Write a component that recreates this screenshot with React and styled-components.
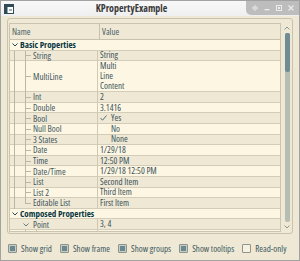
import React from 'react'
import styled, { createGlobalStyle } from 'styled-components'

const GlobalStyle = createGlobalStyle`
  html, body {
    margin: 0;
    padding: 0;
    background: #eee8d5;
  }
  body {
    font-family: "Open Sans", "Liberation Sans", Arial, sans-serif;
    font-stretch: 82%;
    font-size: 9px;
    color: #3f565e;
  }
`

const Window = styled.div`
  width: 300px;
  height: 261px;
  box-sizing: border-box;
  border: 1px solid #a2a2a2;
  background: #eee8d5;
  display: flex;
  flex-direction: column;
  overflow: hidden;
`

const TitleBar = styled.div`
  height: 15px;
  flex: none;
  display: flex;
  align-items: flex-start;
  background: linear-gradient(#f8f8f8, #efefef);
`

const AppIcon = styled.div`
  width: 16px;
  height: 15px;
  display: flex;
  align-items: center;
  justify-content: center;
`

const Title = styled.div`
  flex: 1;
  text-align: center;
  line-height: 15px;
  font-weight: bold;
  font-stretch: 75%;
  font-size: 10px;
  color: #3a3a3a;
`

const Buttons = styled.div`
  width: 53px;
  height: 14px;
  background: #bdbdbd;
  border-bottom-left-radius: 5px;
  display: flex;
  align-items: center;
  justify-content: space-around;
  padding: 0 2px 0 3px;
  box-sizing: border-box;
`

const Frame = styled.div`
  margin: 2px 6px 0 6px;
  height: 216px;
  box-sizing: border-box;
  border: 1px solid #c9c2ae;
  border-radius: 3px;
  padding: 4px 0 1px 1px;
  display: flex;
  flex: none;
`

const Table = styled.div`
  width: 272px;
  box-sizing: border-box;
  border: 1px solid #cbc4b0;
  display: flex;
  flex-direction: column;
  overflow: hidden;
`

const Header = styled.div`
  height: 16px;
  flex: none;
  box-sizing: border-box;
  border-bottom: 1px solid #c8c1ad;
  display: flex;
  background: #eee8d5;
`

const HeadCell = styled.div`
  width: ${p => (p.$wide ? 'auto' : '87px')};
  flex: ${p => (p.$wide ? 1 : 'none')};
  border-right: ${p => (p.$wide ? 'none' : '1px solid #c8c1ad')};
  padding-left: 2px;
  line-height: 15px;
  color: #4a6068;
`

const Body = styled.div`
  flex: 1;
  overflow: hidden;
`

const Row = styled.div`
  display: flex;
  height: ${p => p.$h}px;
  box-sizing: border-box;
  border-bottom: 1px solid #d3ccb8;
  background: ${p => (p.$light ? '#fdf6e3' : '#eee8d5')};
`

const NameCell = styled.div`
  width: ${p => (p.$span ? 'auto' : '87px')};
  flex: ${p => (p.$span ? 1 : 'none')};
  display: flex;
  align-items: stretch;
  border-right: ${p => (p.$span ? 'none' : '1px solid #cfc8b4')};
  white-space: nowrap;
`

const Guide = styled.div`
  width: ${p => p.$w}px;
  flex: none;
  display: flex;
  align-items: center;
  justify-content: center;
  margin-bottom: -1px;
  background-repeat: no-repeat;
  background-image: ${p => {
    const c = '#bdb6a3'
    if (p.$kind === 'pass') return `linear-gradient(${c}, ${c})`
    if (p.$kind === 'tee' || p.$kind === 'end') return `linear-gradient(${c}, ${c}), linear-gradient(${c}, ${c})`
    return 'none'
  }};
  background-size: ${p => {
    if (p.$kind === 'pass') return '1px 100%'
    if (p.$kind === 'tee') return '1px 100%, 6px 1px'
    if (p.$kind === 'end') return '1px 50%, 6px 1px'
    return 'auto'
  }};
  background-position: ${p => {
    const x = p.$w - 6
    if (p.$kind === 'pass') return `${x}px 0`
    if (p.$kind === 'tee' || p.$kind === 'end') return `${x}px 0, ${x}px 50%`
    return '0 0'
  }};
`

const Label = styled.div`
  display: flex;
  align-items: center;
  padding-left: ${p => (p.$group ? 0 : 2)}px;
  font-weight: ${p => (p.$group ? 'bold' : 'normal')};
  font-stretch: ${p => (p.$group ? '75%' : '82%')};
  color: ${p => (p.$group ? '#073642' : '#3f565e')};
`

const ValueCell = styled.div`
  flex: 1;
  display: flex;
  flex-direction: column;
  justify-content: ${p => (p.$multi ? 'flex-start' : 'center')};
  padding-left: 2px;
  white-space: nowrap;
  color: #3b5259;
`

const ValueLine = styled.div`
  line-height: 10px;
  display: flex;
  align-items: center;
`

const Slot = styled.span`
  width: 11px;
  display: inline-flex;
  align-items: center;
`

const Scroll = styled.div`
  width: 11px;
  flex: none;
  display: flex;
  flex-direction: column;
  align-items: center;
`

const Arrow = styled.div`
  height: 10px;
  display: flex;
  align-items: center;
  justify-content: center;
`

const Groove = styled.div`
  flex: 1;
  width: 5px;
  margin-left: 1px;
  border-radius: 2px;
  background: #b6bdb2;
  display: flex;
  flex-direction: column;
`

const Handle = styled.div`
  height: 39px;
  border-radius: 2px;
  background: #6f8c94;
`

const Options = styled.div`
  flex: 1;
  display: flex;
  align-items: center;
  padding: 2px 0 0 7px;
  gap: 8px;
  white-space: nowrap;
`

const Option = styled.label`
  display: flex;
  align-items: center;
  gap: 4px;
  color: #3d5860;
`

const Box = styled.span`
  width: 9px;
  height: 9px;
  box-sizing: border-box;
  border: 1px solid #8d948f;
  border-radius: 1px;
  background: ${p => (p.$checked ? '#c7cdc3' : '#f7f1df')};
  display: flex;
  align-items: center;
  justify-content: center;

  &::after {
    content: '';
    width: 5px;
    height: 5px;
    background: ${p => (p.$checked ? '#6a8890' : 'transparent')};
  }
`

const Chevron = ({ color = '#586e75' }) => (
  <svg width="6" height="4" viewBox="0 0 6 4">
    <polyline points="0.5,0.5 3,3 5.5,0.5" fill="none" stroke={color} strokeWidth="0.9" />
  </svg>
)

const rows = [
  { group: true, label: 'Basic Properties', guides: ['open'] },
  { label: 'String', value: 'String', guides: ['pass', 'tee'] },
  { label: 'MultiLine', value: ['Multi', 'Line', 'Content'], guides: ['pass', 'tee'], h: 31 },
  { label: 'Int', value: '2', guides: ['pass', 'tee'] },
  { label: 'Double', value: '3.1416', guides: ['pass', 'tee'] },
  { label: 'Bool', value: 'Yes', check: true, guides: ['pass', 'tee'] },
  { label: 'Null Bool', value: 'No', slot: true, guides: ['pass', 'tee'] },
  { label: '3 States', value: 'None', slot: true, guides: ['pass', 'tee'] },
  { label: 'Date', value: '1/29/18', guides: ['pass', 'tee'] },
  { label: 'Time', value: '12:50 PM', guides: ['pass', 'tee'] },
  { label: 'Date/Time', value: '1/29/18 12:50 PM', guides: ['pass', 'tee'] },
  { label: 'List', value: 'Second Item', guides: ['pass', 'tee'] },
  { label: 'List 2', value: 'Third Item', guides: ['pass', 'tee'] },
  { label: 'Editable List', value: 'First Item', guides: ['pass', 'end'] },
  { group: true, label: 'Composed Properties', guides: ['open'] },
  { label: 'Point', value: '3, 4', guides: ['none', 'open'] },
  { label: 'x', value: '3', guides: ['none', 'pass', 'tee'] },
  { label: 'y', value: '4', guides: ['none', 'pass', 'tee'] },
]

const options = [
  { text: 'Show grid', checked: true },
  { text: 'Show frame', checked: true },
  { text: 'Show groups', checked: true },
  { text: 'Show tooltips', checked: true },
  { text: 'Read-only', checked: false },
]

const App = () => {
  return (
    <>
      <GlobalStyle />
      <Window>
        <TitleBar>
          <AppIcon>
            <svg width="10" height="10" viewBox="0 0 10 10">
              <rect x="0.5" y="0.5" width="9" height="9" fill="#fff" stroke="#2f4b55" />
              <rect x="1" y="1" width="8" height="2" fill="#2f4b55" />
              <rect x="1" y="3" width="2.5" height="6" fill="#2f4b55" />
              <rect x="5" y="5" width="3" height="2" fill="#9fb3b9" />
            </svg>
          </AppIcon>
          <Title>KPropertyExample</Title>
          <Buttons>
            <svg width="6" height="6" viewBox="0 0 6 6">
              <path d="M3 0.5 L5.5 3 L3 5.5 L0.5 3 Z" fill="none" stroke="#ececec" strokeWidth="1" />
              <circle cx="3" cy="3" r="0.9" fill="#ececec" />
            </svg>
            <svg width="6" height="6" viewBox="0 0 6 6">
              <rect x="0.5" y="4" width="5" height="1.3" fill="#ececec" />
            </svg>
            <svg width="6" height="6" viewBox="0 0 6 6">
              <rect x="0.5" y="0.5" width="5" height="5" fill="none" stroke="#ececec" strokeWidth="1" />
              <rect x="2" y="2" width="2" height="2" fill="#ececec" />
            </svg>
            <svg width="6" height="6" viewBox="0 0 6 6">
              <path d="M0.5 0.5 L5.5 5.5 M5.5 0.5 L0.5 5.5" stroke="#ececec" strokeWidth="1.2" />
            </svg>
          </Buttons>
        </TitleBar>

        <Frame>
          <Table>
            <Header>
              <HeadCell>Name</HeadCell>
              <HeadCell $wide>Value</HeadCell>
            </Header>
            <Body>
              {rows.map((r, i) => (
                <Row key={r.label} $h={r.h || 10.6} $light={i % 2 === 0}>
                  <NameCell $span={r.group}>
                    {r.guides.map((g, j) => (
                      <Guide key={j} $kind={g} $w={j === 0 ? 10 : 11}>
                        {g === 'open' && <Chevron color={r.group ? '#073642' : '#586e75'} />}
                      </Guide>
                    ))}
                    <Label $group={r.group}>{r.label}</Label>
                  </NameCell>
                  {!r.group && (
                    <ValueCell $multi={Array.isArray(r.value)}>
                      {Array.isArray(r.value) ? (
                        r.value.map(v => <ValueLine key={v}>{v}</ValueLine>)
                      ) : (
                        <ValueLine>
                          {(r.check || r.slot) && (
                            <Slot>
                              {r.check && (
                                <svg width="7" height="6" viewBox="0 0 7 6">
                                  <polyline points="0.5,3 2.5,5.2 6.5,0.5" fill="none" stroke="#4a6068" strokeWidth="0.9" />
                                </svg>
                              )}
                            </Slot>
                          )}
                          {r.value}
                        </ValueLine>
                      )}
                    </ValueCell>
                  )}
                </Row>
              ))}
            </Body>
          </Table>
          <Scroll>
            <Arrow>
              <svg width="6" height="4" viewBox="0 0 6 4">
                <polyline points="0.5,3.5 3,1 5.5,3.5" fill="none" stroke="#7d8f93" strokeWidth="0.9" />
              </svg>
            </Arrow>
            <Groove>
              <Handle />
            </Groove>
            <Arrow>
              <svg width="6" height="4" viewBox="0 0 6 4">
                <polyline points="0.5,0.5 3,3 5.5,0.5" fill="none" stroke="#7d8f93" strokeWidth="0.9" />
              </svg>
            </Arrow>
          </Scroll>
        </Frame>

        <Options>
          {options.map(o => (
            <Option key={o.text}>
              <Box $checked={o.checked} />
              {o.text}
            </Option>
          ))}
        </Options>
      </Window>
    </>
  )
}

export default App
